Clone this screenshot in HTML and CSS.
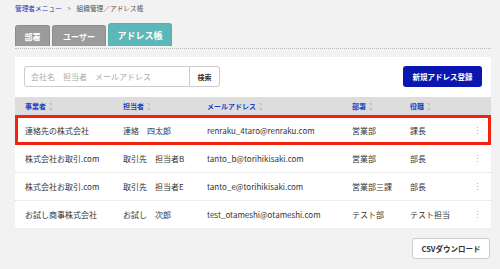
FILE: index.html
```html
<!DOCTYPE html>
<html lang="ja">
<head>
  <meta charset="UTF-8" />
  <title>アドレス帳</title>
  <link rel="stylesheet" href="styles.css">
</head>
<body>
  <div class="page">
    <div class="breadcrumb">
      <a href="#">管理者メニュー</a>
      <span class="sep">&gt;</span>
      <span>組織管理／アドレス帳</span>
    </div>

    <div class="tabs">
      <div class="tab tab-dept">部署</div>
      <div class="tab tab-user">ユーザー</div>
      <div class="tab tab-address active">アドレス帳</div>
    </div>

    <div class="card">
      <div class="toolbar">
        <div class="search">
          <input type="text" placeholder="会社名　担当者　メールアドレス" />
          <button class="search-btn">検索</button>
        </div>
        <button class="new-btn">新規アドレス登録</button>
      </div>

      <div class="table">
        <div class="row head">
          <div>事業者<span class="sort"></span></div>
          <div>担当者<span class="sort"></span></div>
          <div>メールアドレス<span class="sort"></span></div>
          <div>部署<span class="sort"></span></div>
          <div>役職<span class="sort"></span></div>
          <div></div>
        </div>
        <div class="row selected">
          <div>連絡先の株式会社</div>
          <div>連絡　四太郎</div>
          <div>renraku_4taro@renraku.com</div>
          <div>営業部</div>
          <div>課長</div>
          <div class="more">⋮</div>
        </div>
        <div class="row">
          <div>株式会社お取引.com</div>
          <div>取引先　担当者B</div>
          <div>tanto_b@torihikisaki.com</div>
          <div>営業部</div>
          <div>部長</div>
          <div class="more">⋮</div>
        </div>
        <div class="row">
          <div>株式会社お取引.com</div>
          <div>取引先　担当者E</div>
          <div>tanto_e@torihikisaki.com</div>
          <div>営業部三課</div>
          <div>部長</div>
          <div class="more">⋮</div>
        </div>
        <div class="row">
          <div>お試し商事株式会社</div>
          <div>お試し　次郎</div>
          <div>test_otameshi@otameshi.com</div>
          <div>テスト部</div>
          <div>テスト担当</div>
          <div class="more">⋮</div>
        </div>
      </div>
    </div>

    <div class="footer">
      <button class="csv-btn">CSVダウンロード</button>
    </div>
  </div>
</body>
</html>
```

FILE: styles.css
```css
body {
  margin: 0;
  background: #f2f2f2;
  font-family: "Noto Sans CJK JP", "Noto Sans", sans-serif;
  color: #333;
}

.page {
  padding: 0 9px 0 15px;
}

.breadcrumb {
  height: 16px;
  line-height: 16px;
  font-size: 6.7px;
  color: #555;
}

.breadcrumb a {
  color: #1c3bb5;
  text-decoration: none;
}

.breadcrumb .sep {
  margin: 0 4px;
  color: #888;
}

.tabs {
  display: flex;
  align-items: flex-end;
  gap: 2px;
  margin-top: 7px;
  padding-bottom: 2px;
  border-bottom: 1px dotted #bbb;
}

.tab {
  height: 21px;
  line-height: 21px;
  text-align: center;
  background: #9b9b9b;
  color: white;
  font-size: 8px;
  font-weight: bold;
  border-radius: 3px 3px 0 0;
  border: 1px solid #8d8d8d;
  border-bottom: none;
  box-sizing: border-box;
}

.tab-dept {
  width: 35px;
}

.tab-user {
  width: 54px;
}

.tab.active {
  width: 64px;
  height: 23px;
  line-height: 23px;
  background: #5cb8b8;
  border-color: #55b0b0;
  font-size: 9px;
}

.card {
  margin-top: 8px;
  background: white;
}

.toolbar {
  display: flex;
  justify-content: space-between;
  align-items: center;
  padding: 9px 9px 0 9px;
}

.search {
  display: flex;
}

.search input {
  width: 166px;
  height: 21px;
  box-sizing: border-box;
  border: 1px solid #ccc;
  border-radius: 3px 0 0 3px;
  padding: 0 6px;
  font-family: inherit;
  font-size: 8px;
}

.search input::placeholder {
  color: #aaa;
}

.search-btn {
  width: 30px;
  height: 21px;
  border: 1px solid #ccc;
  border-left: none;
  border-radius: 0 3px 3px 0;
  background: white;
  font-family: inherit;
  font-size: 7px;
  font-weight: bold;
  color: #333;
  padding: 0;
}

.new-btn {
  width: 79px;
  height: 21px;
  border: none;
  border-radius: 3px;
  background: #0b16b0;
  color: white;
  font-family: inherit;
  font-size: 7.5px;
  font-weight: bold;
  padding: 0;
}

.table {
  margin-top: 10px;
}

.row {
  display: grid;
  grid-template-columns: 98px 84px 145px 58px 1fr 8px;
  align-items: center;
  height: 28px;
  padding: 0 10px;
  font-size: 8px;
  border-bottom: 1px dotted #ddd;
  box-sizing: border-box;
  white-space: nowrap;
}

.row.head {
  height: 18px;
  background: #dddddd;
  color: #2143c4;
  font-size: 7px;
  font-weight: bold;
  border-bottom: none;
}

.row.selected {
  height: 30px;
  box-shadow: inset 0 0 0 3px #f3220e;
  border-bottom: none;
}

.sort {
  display: inline-block;
  width: 3px;
  height: 7px;
  margin-left: 3px;
  vertical-align: -1px;
  background:
    linear-gradient(to top right, transparent 50%, #bbb 50%) left top / 50% 3px no-repeat,
    linear-gradient(to top left, transparent 50%, #bbb 50%) right top / 50% 3px no-repeat,
    linear-gradient(to bottom right, transparent 50%, #bbb 50%) left bottom / 50% 3px no-repeat,
    linear-gradient(to bottom left, transparent 50%, #bbb 50%) right bottom / 50% 3px no-repeat;
}

.more {
  justify-self: center;
  color: #aaa;
  font-size: 9px;
}

.footer {
  display: flex;
  justify-content: flex-end;
  padding-top: 9px;
}

.csv-btn {
  width: 78px;
  height: 21px;
  margin-right: 1px;
  border: 1px solid #ccc;
  border-radius: 3px;
  background: white;
  font-family: inherit;
  font-size: 7.5px;
  font-weight: bold;
  color: #333;
  padding: 0;
}
```
